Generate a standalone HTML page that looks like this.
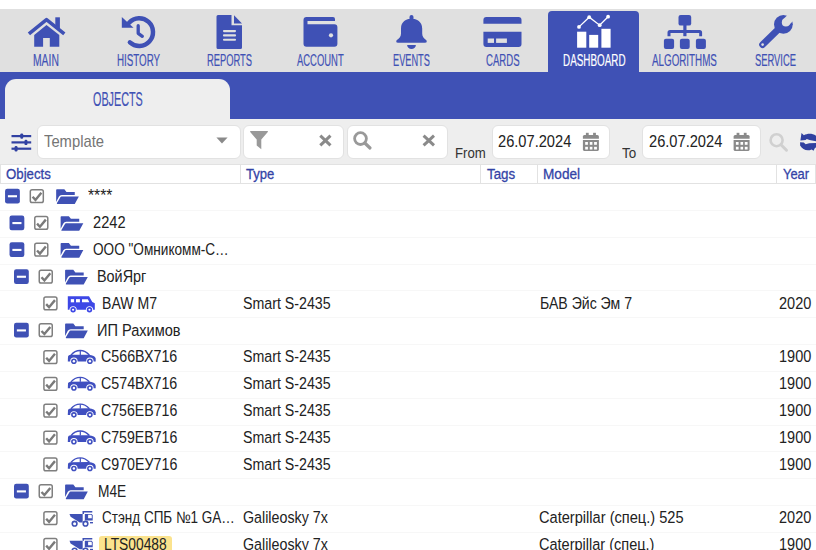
<!DOCTYPE html>
<html><head><meta charset="utf-8"><style>
html,body{margin:0;padding:0;}
body{width:816px;height:550px;position:relative;overflow:hidden;background:#fff;font-family:"Liberation Sans",sans-serif;}
div{position:absolute;}
.t{position:absolute;white-space:nowrap;transform-origin:0 0;}
svg{position:absolute;left:0;top:0;}
</style></head><body>
<div style="left:0.00px;top:9.00px;width:816.00px;height:63.00px;background:#e0e0e0;"></div><div style="left:548.00px;top:10.90px;width:91.00px;height:61.10px;background:#3f51b5;border-radius:4px 4px 0 0;"></div><div style="left:0.00px;top:72.00px;width:816.00px;height:47.00px;background:#3f51b5;"></div><div style="left:5.00px;top:79.00px;width:225.00px;height:41.00px;background:#eeeeee;border-radius:11px 11px 0 0;"></div><div style="left:0.00px;top:119.00px;width:816.00px;height:46.00px;background:#eeeeee;"></div><div style="left:37.00px;top:125.10px;width:203.60px;height:33.60px;background:#fff;border:1px solid #e2e2e2;box-sizing:border-box;border-radius:6px;"></div><div style="left:243.00px;top:125.10px;width:100.60px;height:33.60px;background:#fff;border:1px solid #e2e2e2;box-sizing:border-box;border-radius:6px;"></div><div style="left:347.00px;top:125.10px;width:100.60px;height:33.60px;background:#fff;border:1px solid #e2e2e2;box-sizing:border-box;border-radius:6px;"></div><div style="left:492.10px;top:125.10px;width:117.60px;height:33.60px;background:#fff;border:1px solid #e2e2e2;box-sizing:border-box;border-radius:6px;"></div><div style="left:641.90px;top:125.10px;width:118.80px;height:33.60px;background:#fff;border:1px solid #e2e2e2;box-sizing:border-box;border-radius:6px;"></div><div style="left:0.00px;top:164.20px;width:816.00px;height:19.40px;background:#fff;border:1px solid #e2e2e2;box-sizing:border-box;"></div><div style="left:240.00px;top:164.60px;width:1.00px;height:18.60px;background:#e2e2e2;"></div><div style="left:480.20px;top:164.60px;width:1.00px;height:18.60px;background:#e2e2e2;"></div><div style="left:536.90px;top:164.60px;width:1.00px;height:18.60px;background:#e2e2e2;"></div><div style="left:775.90px;top:164.60px;width:1.00px;height:18.60px;background:#e2e2e2;"></div><div style="left:0.00px;top:209.97px;width:816.00px;height:1.00px;background:#f7f7f7;"></div><div style="left:0.00px;top:236.80px;width:816.00px;height:1.00px;background:#f7f7f7;"></div><div style="left:0.00px;top:263.64px;width:816.00px;height:1.00px;background:#f7f7f7;"></div><div style="left:0.00px;top:290.47px;width:816.00px;height:1.00px;background:#f7f7f7;"></div><div style="left:0.00px;top:317.30px;width:816.00px;height:1.00px;background:#f7f7f7;"></div><div style="left:0.00px;top:344.13px;width:816.00px;height:1.00px;background:#f7f7f7;"></div><div style="left:0.00px;top:370.97px;width:816.00px;height:1.00px;background:#f7f7f7;"></div><div style="left:0.00px;top:397.80px;width:816.00px;height:1.00px;background:#f7f7f7;"></div><div style="left:0.00px;top:424.63px;width:816.00px;height:1.00px;background:#f7f7f7;"></div><div style="left:0.00px;top:451.47px;width:816.00px;height:1.00px;background:#f7f7f7;"></div><div style="left:0.00px;top:478.30px;width:816.00px;height:1.00px;background:#f7f7f7;"></div><div style="left:0.00px;top:505.13px;width:816.00px;height:1.00px;background:#f7f7f7;"></div><div style="left:0.00px;top:531.97px;width:816.00px;height:1.00px;background:#f7f7f7;"></div><div style="left:0.00px;top:558.80px;width:816.00px;height:1.00px;background:#f7f7f7;"></div><div style="left:99.20px;top:536.13px;width:72.40px;height:22.00px;background:#fbe38e;border-radius:3px;"></div>
<svg width="816" height="550" viewBox="0 0 816 550">
<g fill="#3f51b5">
 <path d="M28.9,33.8 L46.5,19.7 L64.3,33.8" fill="none" stroke="#3f51b5" stroke-width="3.6" stroke-linejoin="round"/>
 <rect x="55.3" y="17.3" width="4.6" height="11"/>
 <path d="M34.2,34.9 L46.5,25 L59.3,34.9 V46.7 H49.8 V38 H43.1 V46.7 H34.2 Z"/>
</g>
<g>
 <path d="M129.9,42.3 A13.8,13.8 0 1 0 129.1,22.7" fill="none" stroke="#3f51b5" stroke-width="4.5" stroke-linecap="round"/>
 <path d="M121.8,16.9 V27.8 H133.5 Z" fill="#3f51b5"/>
 <path d="M138.2,25.7 V33.3 L142.3,36.3" fill="none" stroke="#3f51b5" stroke-width="3.3" stroke-linecap="round" stroke-linejoin="round"/>
</g>
<g fill="#3f51b5">
 <path d="M218,14.9 H231.5 V25.3 H242 V47.4 Q242,48.9 240.5,48.9 H218 Q216.5,48.9 216.5,47.4 V16.4 Q216.5,14.9 218,14.9 Z"/>
 <path d="M234,15.2 L242,23.5 H234 Z"/>
 <g stroke="#e0e0e0" stroke-width="2.1" stroke-linecap="round"><line x1="224" y1="31.1" x2="235" y2="31.1"/><line x1="224" y1="35.4" x2="235" y2="35.4"/><line x1="224" y1="39.7" x2="235" y2="39.7"/></g>
</g>
<g fill="#3f51b5">
 <path d="M306.5,16.9 H333 Q335,16.9 335,18.9 V20.9 H307.5 V24.2 H334.4 Q337.4,24.2 337.4,27.2 V43.7 Q337.4,46.7 334.4,46.7 H306.5 Q303.5,46.7 303.5,43.7 V19.9 Q303.5,16.9 306.5,16.9 Z"/>
 <circle cx="331" cy="35.3" r="2.1" fill="#e0e0e0"/>
</g>
<g fill="#3f51b5">
 <rect x="409.5" y="15" width="4" height="5" rx="2"/>
 <path d="M411.5,18.6 C416.8,18.6 422.2,22 422.2,28.5 V33.5 Q422.2,37.5 426.4,40.2 Q427.5,42.7 425,42.7 H398 Q395.5,42.7 396.6,40.2 Q401,37.5 401,33.5 V28.5 C401,22 406.2,18.6 411.5,18.6 Z"/>
 <path d="M407.1,44.9 H415.9 A4.4,4 0 0 1 407.1,44.9 Z"/>
</g>
<g fill="#3f51b5">
 <path d="M486.4,16.9 H518.5 Q521.5,16.9 521.5,19.9 V23.8 H483.4 V19.9 Q483.4,16.9 486.4,16.9 Z"/>
 <path d="M483.4,31.8 H521.5 V43.9 Q521.5,46.9 518.5,46.9 H486.4 Q483.4,46.9 483.4,43.9 Z"/>
 <rect x="487.7" y="38.5" width="6.3" height="4.4" fill="#e0e0e0"/>
 <rect x="496.1" y="38.5" width="10.8" height="4.4" fill="#e0e0e0"/>
</g>
<g fill="#fff">
 <polyline points="579,26.9 589.2,17.2 599.7,25.2 608.1,16.7" fill="none" stroke="#fff" stroke-width="1.3"/>
 <circle cx="579" cy="26.9" r="1.9"/><circle cx="589.2" cy="17.2" r="1.9"/><circle cx="599.7" cy="25.2" r="1.9"/><circle cx="608.1" cy="16.7" r="1.9"/>
 <rect x="577.1" y="31.7" width="9.2" height="16"/>
 <rect x="589.2" y="34.9" width="9" height="12.8"/>
 <rect x="601.4" y="28.8" width="9.2" height="18.9"/>
</g>
<g fill="#3f51b5">
 <rect x="678.5" y="14.9" width="12.7" height="10.7" rx="2.2"/>
 <rect x="683.3" y="25" width="3.2" height="11.2"/>
 <path d="M667.5,36.2 V32.5 Q667.5,30 670,30 H699.6 Q702.1,30 702.1,32.5 V36.2 H699.2 V32.9 H670.5 V36.2 Z"/>
 <rect x="663.9" y="38.7" width="10.2" height="10.2" rx="2"/>
 <rect x="679.9" y="38.7" width="9.8" height="10.2" rx="2"/>
 <rect x="695.9" y="38.7" width="10" height="10.2" rx="2"/>
</g>
<g fill="#3f51b5">
 <line x1="762.6" y1="44.6" x2="780" y2="27.6" stroke="#3f51b5" stroke-width="6.8" stroke-linecap="round"/>
 <circle cx="783.4" cy="24.3" r="9.4"/>
</g>
<g fill="#e0e0e0">
 <circle cx="785.9" cy="22.4" r="4.1"/>
 <line x1="785.9" y1="22.4" x2="796" y2="12.3" stroke="#e0e0e0" stroke-width="8.2"/>
 <circle cx="762.6" cy="44.6" r="1.3"/>
</g>
<rect x="5.06" y="188.70" width="14.8" height="14.7" rx="2.2" fill="#3f51b5"/><rect x="7.91" y="195.20" width="9.1" height="2.1" fill="#fff"/><g transform="translate(56.16,189.30)" fill="#3f51b5"><path d="M0.8,0 H8.2 L10.3,2.7 H18.6 V5.7 H5.6 Q3.6,5.7 2.7,7.4 L0,12.6 V0.8 Q0,0 0.8,0 Z"/><path d="M5.4,7.1 H22.7 L18.6,14.7 H1.3 Q0.4,14.7 0.8,13.8 L4.2,8 Q4.6,7.1 5.4,7.1 Z"/></g><rect x="30.31" y="189.65" width="13" height="12.8" rx="1.8" fill="#fff" stroke="#7f7f7f" stroke-width="1.5"/><path d="M32.56,196.80 L35.46,199.90 L41.36,192.80" fill="none" stroke="#7a7a7a" stroke-width="2.4"/><rect x="9.53" y="215.53" width="14.8" height="14.7" rx="2.2" fill="#3f51b5"/><rect x="12.38" y="222.03" width="9.1" height="2.1" fill="#fff"/><g transform="translate(60.63,216.13)" fill="#3f51b5"><path d="M0.8,0 H8.2 L10.3,2.7 H18.6 V5.7 H5.6 Q3.6,5.7 2.7,7.4 L0,12.6 V0.8 Q0,0 0.8,0 Z"/><path d="M5.4,7.1 H22.7 L18.6,14.7 H1.3 Q0.4,14.7 0.8,13.8 L4.2,8 Q4.6,7.1 5.4,7.1 Z"/></g><rect x="34.78" y="216.48" width="13" height="12.8" rx="1.8" fill="#fff" stroke="#7f7f7f" stroke-width="1.5"/><path d="M37.03,223.63 L39.93,226.73 L45.83,219.63" fill="none" stroke="#7a7a7a" stroke-width="2.4"/><rect x="9.53" y="242.37" width="14.8" height="14.7" rx="2.2" fill="#3f51b5"/><rect x="12.38" y="248.87" width="9.1" height="2.1" fill="#fff"/><g transform="translate(60.63,242.97)" fill="#3f51b5"><path d="M0.8,0 H8.2 L10.3,2.7 H18.6 V5.7 H5.6 Q3.6,5.7 2.7,7.4 L0,12.6 V0.8 Q0,0 0.8,0 Z"/><path d="M5.4,7.1 H22.7 L18.6,14.7 H1.3 Q0.4,14.7 0.8,13.8 L4.2,8 Q4.6,7.1 5.4,7.1 Z"/></g><rect x="34.78" y="243.32" width="13" height="12.8" rx="1.8" fill="#fff" stroke="#7f7f7f" stroke-width="1.5"/><path d="M37.03,250.47 L39.93,253.57 L45.83,246.47" fill="none" stroke="#7a7a7a" stroke-width="2.4"/><rect x="14.00" y="269.20" width="14.8" height="14.7" rx="2.2" fill="#3f51b5"/><rect x="16.85" y="275.70" width="9.1" height="2.1" fill="#fff"/><g transform="translate(65.10,269.80)" fill="#3f51b5"><path d="M0.8,0 H8.2 L10.3,2.7 H18.6 V5.7 H5.6 Q3.6,5.7 2.7,7.4 L0,12.6 V0.8 Q0,0 0.8,0 Z"/><path d="M5.4,7.1 H22.7 L18.6,14.7 H1.3 Q0.4,14.7 0.8,13.8 L4.2,8 Q4.6,7.1 5.4,7.1 Z"/></g><rect x="39.25" y="270.15" width="13" height="12.8" rx="1.8" fill="#fff" stroke="#7f7f7f" stroke-width="1.5"/><path d="M41.50,277.30 L44.40,280.40 L50.30,273.30" fill="none" stroke="#7a7a7a" stroke-width="2.4"/><rect x="43.92" y="296.98" width="13" height="12.8" rx="1.8" fill="#fff" stroke="#7f7f7f" stroke-width="1.5"/><path d="M46.17,304.13 L49.07,307.23 L54.97,300.13" fill="none" stroke="#7a7a7a" stroke-width="2.4"/><g transform="translate(67.80,296.13)"><path d="M0,0 H21.2 L24.5,5.8 L27,7 V13.7 H0 Z" fill="#3d47e6"/><rect x="3" y="3" width="3.3" height="3.2" fill="#fff"/><rect x="8.2" y="3" width="3.9" height="3.2" fill="#fff"/><path d="M14.2,3 H20 L21.6,6.2 H14.2 Z" fill="#fff"/><circle cx="5.3" cy="13.6" r="3.6" fill="#fff"/><circle cx="21.7" cy="13.6" r="3.6" fill="#fff"/><circle cx="5.3" cy="13.6" r="2.7" fill="#3d47e6"/><circle cx="21.7" cy="13.6" r="2.7" fill="#3d47e6"/><circle cx="5.3" cy="13.6" r="1.1" fill="#fff"/><circle cx="21.7" cy="13.6" r="1.1" fill="#fff"/></g><rect x="14.00" y="322.87" width="14.8" height="14.7" rx="2.2" fill="#3f51b5"/><rect x="16.85" y="329.37" width="9.1" height="2.1" fill="#fff"/><g transform="translate(65.10,323.46)" fill="#3f51b5"><path d="M0.8,0 H8.2 L10.3,2.7 H18.6 V5.7 H5.6 Q3.6,5.7 2.7,7.4 L0,12.6 V0.8 Q0,0 0.8,0 Z"/><path d="M5.4,7.1 H22.7 L18.6,14.7 H1.3 Q0.4,14.7 0.8,13.8 L4.2,8 Q4.6,7.1 5.4,7.1 Z"/></g><rect x="39.25" y="323.81" width="13" height="12.8" rx="1.8" fill="#fff" stroke="#7f7f7f" stroke-width="1.5"/><path d="M41.50,330.96 L44.40,334.06 L50.30,326.96" fill="none" stroke="#7a7a7a" stroke-width="2.4"/><rect x="43.92" y="350.65" width="13" height="12.8" rx="1.8" fill="#fff" stroke="#7f7f7f" stroke-width="1.5"/><path d="M46.17,357.80 L49.07,360.90 L54.97,353.80" fill="none" stroke="#7a7a7a" stroke-width="2.4"/><g transform="translate(67.80,344.60)"><path d="M0.2,11.8 Q0.6,10.3 2.8,10.2 L20.8,10.1 Q27.3,10.5 27.9,14 L27.9,16.8 H0 Z" fill="#3f4fc0"/><path d="M3.2,10.5 Q6.8,5.9 12.4,5.9 Q17.6,6.0 21.6,10.4" fill="none" stroke="#3f4fc0" stroke-width="1.4"/><rect x="11.9" y="6.1" width="1.2" height="4.3" fill="#3f4fc0"/><circle cx="6.1" cy="16.6" r="3.7" fill="#fff"/><circle cx="22.1" cy="16.6" r="3.7" fill="#fff"/><circle cx="6.1" cy="16.6" r="2.8" fill="#3f4fc0"/><circle cx="22.1" cy="16.6" r="2.8" fill="#3f4fc0"/><circle cx="6.1" cy="16.6" r="1.2" fill="#fff"/><circle cx="22.1" cy="16.6" r="1.2" fill="#fff"/></g><rect x="43.92" y="377.48" width="13" height="12.8" rx="1.8" fill="#fff" stroke="#7f7f7f" stroke-width="1.5"/><path d="M46.17,384.63 L49.07,387.73 L54.97,380.63" fill="none" stroke="#7a7a7a" stroke-width="2.4"/><g transform="translate(67.80,371.43)"><path d="M0.2,11.8 Q0.6,10.3 2.8,10.2 L20.8,10.1 Q27.3,10.5 27.9,14 L27.9,16.8 H0 Z" fill="#3f4fc0"/><path d="M3.2,10.5 Q6.8,5.9 12.4,5.9 Q17.6,6.0 21.6,10.4" fill="none" stroke="#3f4fc0" stroke-width="1.4"/><rect x="11.9" y="6.1" width="1.2" height="4.3" fill="#3f4fc0"/><circle cx="6.1" cy="16.6" r="3.7" fill="#fff"/><circle cx="22.1" cy="16.6" r="3.7" fill="#fff"/><circle cx="6.1" cy="16.6" r="2.8" fill="#3f4fc0"/><circle cx="22.1" cy="16.6" r="2.8" fill="#3f4fc0"/><circle cx="6.1" cy="16.6" r="1.2" fill="#fff"/><circle cx="22.1" cy="16.6" r="1.2" fill="#fff"/></g><rect x="43.92" y="404.31" width="13" height="12.8" rx="1.8" fill="#fff" stroke="#7f7f7f" stroke-width="1.5"/><path d="M46.17,411.46 L49.07,414.56 L54.97,407.46" fill="none" stroke="#7a7a7a" stroke-width="2.4"/><g transform="translate(67.80,398.26)"><path d="M0.2,11.8 Q0.6,10.3 2.8,10.2 L20.8,10.1 Q27.3,10.5 27.9,14 L27.9,16.8 H0 Z" fill="#3f4fc0"/><path d="M3.2,10.5 Q6.8,5.9 12.4,5.9 Q17.6,6.0 21.6,10.4" fill="none" stroke="#3f4fc0" stroke-width="1.4"/><rect x="11.9" y="6.1" width="1.2" height="4.3" fill="#3f4fc0"/><circle cx="6.1" cy="16.6" r="3.7" fill="#fff"/><circle cx="22.1" cy="16.6" r="3.7" fill="#fff"/><circle cx="6.1" cy="16.6" r="2.8" fill="#3f4fc0"/><circle cx="22.1" cy="16.6" r="2.8" fill="#3f4fc0"/><circle cx="6.1" cy="16.6" r="1.2" fill="#fff"/><circle cx="22.1" cy="16.6" r="1.2" fill="#fff"/></g><rect x="43.92" y="431.15" width="13" height="12.8" rx="1.8" fill="#fff" stroke="#7f7f7f" stroke-width="1.5"/><path d="M46.17,438.30 L49.07,441.40 L54.97,434.30" fill="none" stroke="#7a7a7a" stroke-width="2.4"/><g transform="translate(67.80,425.10)"><path d="M0.2,11.8 Q0.6,10.3 2.8,10.2 L20.8,10.1 Q27.3,10.5 27.9,14 L27.9,16.8 H0 Z" fill="#3f4fc0"/><path d="M3.2,10.5 Q6.8,5.9 12.4,5.9 Q17.6,6.0 21.6,10.4" fill="none" stroke="#3f4fc0" stroke-width="1.4"/><rect x="11.9" y="6.1" width="1.2" height="4.3" fill="#3f4fc0"/><circle cx="6.1" cy="16.6" r="3.7" fill="#fff"/><circle cx="22.1" cy="16.6" r="3.7" fill="#fff"/><circle cx="6.1" cy="16.6" r="2.8" fill="#3f4fc0"/><circle cx="22.1" cy="16.6" r="2.8" fill="#3f4fc0"/><circle cx="6.1" cy="16.6" r="1.2" fill="#fff"/><circle cx="22.1" cy="16.6" r="1.2" fill="#fff"/></g><rect x="43.92" y="457.98" width="13" height="12.8" rx="1.8" fill="#fff" stroke="#7f7f7f" stroke-width="1.5"/><path d="M46.17,465.13 L49.07,468.23 L54.97,461.13" fill="none" stroke="#7a7a7a" stroke-width="2.4"/><g transform="translate(67.80,451.93)"><path d="M0.2,11.8 Q0.6,10.3 2.8,10.2 L20.8,10.1 Q27.3,10.5 27.9,14 L27.9,16.8 H0 Z" fill="#3f4fc0"/><path d="M3.2,10.5 Q6.8,5.9 12.4,5.9 Q17.6,6.0 21.6,10.4" fill="none" stroke="#3f4fc0" stroke-width="1.4"/><rect x="11.9" y="6.1" width="1.2" height="4.3" fill="#3f4fc0"/><circle cx="6.1" cy="16.6" r="3.7" fill="#fff"/><circle cx="22.1" cy="16.6" r="3.7" fill="#fff"/><circle cx="6.1" cy="16.6" r="2.8" fill="#3f4fc0"/><circle cx="22.1" cy="16.6" r="2.8" fill="#3f4fc0"/><circle cx="6.1" cy="16.6" r="1.2" fill="#fff"/><circle cx="22.1" cy="16.6" r="1.2" fill="#fff"/></g><rect x="14.00" y="483.86" width="14.8" height="14.7" rx="2.2" fill="#3f51b5"/><rect x="16.85" y="490.36" width="9.1" height="2.1" fill="#fff"/><g transform="translate(65.10,484.46)" fill="#3f51b5"><path d="M0.8,0 H8.2 L10.3,2.7 H18.6 V5.7 H5.6 Q3.6,5.7 2.7,7.4 L0,12.6 V0.8 Q0,0 0.8,0 Z"/><path d="M5.4,7.1 H22.7 L18.6,14.7 H1.3 Q0.4,14.7 0.8,13.8 L4.2,8 Q4.6,7.1 5.4,7.1 Z"/></g><rect x="39.25" y="484.81" width="13" height="12.8" rx="1.8" fill="#fff" stroke="#7f7f7f" stroke-width="1.5"/><path d="M41.50,491.96 L44.40,495.06 L50.30,487.96" fill="none" stroke="#7a7a7a" stroke-width="2.4"/><rect x="43.92" y="511.65" width="13" height="12.8" rx="1.8" fill="#fff" stroke="#7f7f7f" stroke-width="1.5"/><path d="M46.17,518.80 L49.07,521.90 L54.97,514.80" fill="none" stroke="#7a7a7a" stroke-width="2.4"/><g transform="translate(62,506.70)"><path d="M7.5,7.2 H20.7 V15.8 H17.7 L8.6,10 Z" fill="#3f51b5"/><path d="M20.5,4.4 H30.3 V5.9 H22 V7.2 H20.5 Z" fill="#3f51b5"/><path d="M22.8,7.2 H29.8 L30.7,8.6 V13.7 H22.8 Z" fill="#3f51b5"/><path d="M26.1,8.1 H29.3 L29.8,9 V11.6 H26.1 Z" fill="#fff"/><rect x="28" y="15.3" width="3" height="1.4" fill="#3f51b5"/><circle cx="12.6" cy="17" r="3.1" fill="#3f51b5"/><circle cx="23.5" cy="17" r="3.1" fill="#3f51b5"/><circle cx="12.6" cy="17" r="1.5" fill="#fff"/><circle cx="23.5" cy="17" r="1.5" fill="#fff"/></g><rect x="43.92" y="538.48" width="13" height="12.8" rx="1.8" fill="#fff" stroke="#7f7f7f" stroke-width="1.5"/><path d="M46.17,545.63 L49.07,548.73 L54.97,541.63" fill="none" stroke="#7a7a7a" stroke-width="2.4"/><g transform="translate(62,533.53)"><path d="M7.5,7.2 H20.7 V15.8 H17.7 L8.6,10 Z" fill="#3f51b5"/><path d="M20.5,4.4 H30.3 V5.9 H22 V7.2 H20.5 Z" fill="#3f51b5"/><path d="M22.8,7.2 H29.8 L30.7,8.6 V13.7 H22.8 Z" fill="#3f51b5"/><path d="M26.1,8.1 H29.3 L29.8,9 V11.6 H26.1 Z" fill="#fff"/><rect x="28" y="15.3" width="3" height="1.4" fill="#3f51b5"/><circle cx="12.6" cy="17" r="3.1" fill="#3f51b5"/><circle cx="23.5" cy="17" r="3.1" fill="#3f51b5"/><circle cx="12.6" cy="17" r="1.5" fill="#fff"/><circle cx="23.5" cy="17" r="1.5" fill="#fff"/></g>
<g fill="#3141a2">
 <rect x="11.5" y="135.0" width="19.7" height="2.2"/>
 <rect x="11.5" y="141.3" width="19.7" height="2.2"/>
 <rect x="11.5" y="147.6" width="19.7" height="2.2"/>
 <rect x="20.3" y="133.4" width="2.9" height="5.4" rx="1.2"/>
 <rect x="24.5" y="139.7" width="2.9" height="5.4" rx="1.2"/>
 <rect x="14.6" y="146.0" width="2.9" height="5.4" rx="1.2"/>
</g>
<path d="M216.4,137.6 H227.6 L222,143.6 Z" fill="#8a8a8a"/>
<path d="M250.6,131 H267.4 Q268.3,131.2 267.8,132 L261.3,139.5 V149.2 L256.7,145.6 V139.5 L250.2,132 Q249.8,131.2 250.6,131 Z" fill="#999"/>
<g stroke="#8a8a8a" stroke-width="3" stroke-linecap="butt">
 <line x1="320.3" y1="135.6" x2="330.5" y2="145.3"/><line x1="330.5" y1="135.6" x2="320.3" y2="145.3"/>
 <line x1="423.6" y1="135.6" x2="434" y2="145.3"/><line x1="434" y1="135.6" x2="423.6" y2="145.3"/>
</g>
<g stroke="#999" fill="none">
 <circle cx="360.5" cy="138.6" r="5.9" stroke-width="2.8"/>
 <line x1="364.8" y1="143" x2="370" y2="148" stroke-width="3.2" stroke-linecap="round"/>
</g>
<g stroke="#d0d0d0" fill="none">
 <circle cx="776.6" cy="140.2" r="6" stroke-width="2.6"/>
 <line x1="781" y1="144.7" x2="786.5" y2="150.2" stroke-width="3" stroke-linecap="round"/>
</g>
<g fill="#8a8a8a" transform="translate(0.00,0)">
 <rect x="585.9" y="132.8" width="2.8" height="3"/><rect x="593.1" y="132.8" width="2.8" height="3"/>
 <path d="M584.4,135.1 H597.4 Q598.9,135.1 598.9,136.6 V138.7 H582.9 V136.6 Q582.9,135.1 584.4,135.1 Z"/>
 <path d="M582.9,140 H598.9 V149.6 Q598.9,150.9 597.6,150.9 H584.2 Q582.9,150.9 582.9,149.6 Z"/>
 <g fill="#fff"><rect x="585.2" y="142" width="2.7" height="2.8"/><rect x="589.8" y="142" width="2.6" height="2.8"/><rect x="594.1" y="142" width="2.8" height="2.8"/>
 <rect x="585.2" y="146.8" width="2.7" height="2.7"/><rect x="589.8" y="146.8" width="2.6" height="2.7"/><rect x="594.1" y="146.8" width="2.8" height="2.7"/></g>
</g><g fill="#8a8a8a" transform="translate(150.70,0)">
 <rect x="585.9" y="132.8" width="2.8" height="3"/><rect x="593.1" y="132.8" width="2.8" height="3"/>
 <path d="M584.4,135.1 H597.4 Q598.9,135.1 598.9,136.6 V138.7 H582.9 V136.6 Q582.9,135.1 584.4,135.1 Z"/>
 <path d="M582.9,140 H598.9 V149.6 Q598.9,150.9 597.6,150.9 H584.2 Q582.9,150.9 582.9,149.6 Z"/>
 <g fill="#fff"><rect x="585.2" y="142" width="2.7" height="2.8"/><rect x="589.8" y="142" width="2.6" height="2.8"/><rect x="594.1" y="142" width="2.8" height="2.8"/>
 <rect x="585.2" y="146.8" width="2.7" height="2.7"/><rect x="589.8" y="146.8" width="2.6" height="2.7"/><rect x="594.1" y="146.8" width="2.8" height="2.7"/></g>
</g>
<g fill="#3040a0"><path d="M800.4,140.6 L801.5,133.0 L803.9,135.3 C807.5,133.2 812.5,133.2 816.5,136 V141.3 L809.5,139.9 L806.8,139.0 L805.6,140.0 Z"/><path d="M800.1,142.2 L803.8,142.6 L805.6,144.3 L809.2,143.3 L816.5,143.0 V146.8 L814.6,148.6 L813.6,150.8 L811.6,149.4 C807,151.6 802.5,149.4 800.1,145.5 Z"/></g>
</svg>
<span class="t" style="left:33.30px;top:51.68px;font-size:16.45px;line-height:16.45px;color:#3f51b5;transform:scaleX(0.6298);-webkit-text-stroke:0.2px #3f51b5;">MAIN</span><span class="t" style="left:116.50px;top:51.68px;font-size:16.45px;line-height:16.45px;color:#3f51b5;transform:scaleX(0.5944);-webkit-text-stroke:0.2px #3f51b5;">HISTORY</span><span class="t" style="left:206.50px;top:51.68px;font-size:16.45px;line-height:16.45px;color:#3f51b5;transform:scaleX(0.5693);-webkit-text-stroke:0.2px #3f51b5;">REPORTS</span><span class="t" style="left:297.00px;top:51.68px;font-size:16.45px;line-height:16.45px;color:#3f51b5;transform:scaleX(0.5742);-webkit-text-stroke:0.2px #3f51b5;">ACCOUNT</span><span class="t" style="left:393.40px;top:51.68px;font-size:16.45px;line-height:16.45px;color:#3f51b5;transform:scaleX(0.5592);-webkit-text-stroke:0.2px #3f51b5;">EVENTS</span><span class="t" style="left:485.80px;top:51.68px;font-size:16.45px;line-height:16.45px;color:#3f51b5;transform:scaleX(0.5836);-webkit-text-stroke:0.2px #3f51b5;">CARDS</span><span class="t" style="left:562.60px;top:51.68px;font-size:16.45px;line-height:16.45px;color:#fff;transform:scaleX(0.6008);-webkit-text-stroke:0.2px #fff;">DASHBOARD</span><span class="t" style="left:652.30px;top:51.68px;font-size:16.45px;line-height:16.45px;color:#3f51b5;transform:scaleX(0.5968);-webkit-text-stroke:0.2px #3f51b5;">ALGORITHMS</span><span class="t" style="left:755.40px;top:51.68px;font-size:16.45px;line-height:16.45px;color:#3f51b5;transform:scaleX(0.5701);-webkit-text-stroke:0.2px #3f51b5;">SERVICE</span><span class="t" style="left:92.50px;top:88.50px;font-size:20.67px;line-height:20.67px;color:#3f51b5;transform:scaleX(0.5224);-webkit-text-stroke:0.2px #3f51b5;">OBJECTS</span><span class="t" style="left:44.00px;top:133.12px;font-size:16.16px;line-height:16.16px;color:#757575;transform:scaleX(0.9152);">Template</span><span class="t" style="left:455.20px;top:144.61px;font-size:14.99px;line-height:14.99px;color:#333;transform:scaleX(0.8805);">From</span><span class="t" style="left:622.10px;top:144.61px;font-size:14.99px;line-height:14.99px;color:#333;transform:scaleX(0.8968);">To</span><span class="t" style="left:498.30px;top:133.32px;font-size:16.16px;line-height:16.16px;color:#222;transform:scaleX(0.9064);">26.07.2024</span><span class="t" style="left:649.10px;top:133.32px;font-size:16.16px;line-height:16.16px;color:#222;transform:scaleX(0.9064);">26.07.2024</span><span class="t" style="left:6.25px;top:166.58px;font-size:14.56px;line-height:14.56px;color:#3343a6;transform:scaleX(0.9089);-webkit-text-stroke:0.3px #3343a6;">Objects</span><span class="t" style="left:246.00px;top:166.58px;font-size:14.56px;line-height:14.56px;color:#3343a6;transform:scaleX(0.8968);-webkit-text-stroke:0.3px #3343a6;">Type</span><span class="t" style="left:486.80px;top:166.58px;font-size:14.56px;line-height:14.56px;color:#3343a6;transform:scaleX(0.9172);-webkit-text-stroke:0.3px #3343a6;">Tags</span><span class="t" style="left:542.50px;top:166.58px;font-size:14.56px;line-height:14.56px;color:#3343a6;transform:scaleX(0.9358);-webkit-text-stroke:0.3px #3343a6;">Model</span><span class="t" style="left:782.60px;top:166.58px;font-size:14.56px;line-height:14.56px;color:#3343a6;transform:scaleX(0.8874);-webkit-text-stroke:0.3px #3343a6;">Year</span><span class="t" style="left:88.30px;top:187.37px;font-size:16.30px;line-height:16.30px;color:#222;transform:scaleX(0.9615);">****</span><span class="t" style="left:92.60px;top:214.20px;font-size:16.30px;line-height:16.30px;color:#222;transform:scaleX(0.8989);">2242</span><span class="t" style="left:92.90px;top:241.04px;font-size:16.30px;line-height:16.30px;color:#222;transform:scaleX(0.8355);">ООО "Омникомм-С…</span><span class="t" style="left:97.30px;top:267.87px;font-size:16.30px;line-height:16.30px;color:#222;transform:scaleX(0.8848);">ВойЯрг</span><span class="t" style="left:101.90px;top:294.70px;font-size:16.30px;line-height:16.30px;color:#222;transform:scaleX(0.8649);">BAW M7</span><span class="t" style="left:242.50px;top:294.70px;font-size:16.30px;line-height:16.30px;color:#222;transform:scaleX(0.8729);">Smart S-2435</span><span class="t" style="left:539.70px;top:294.70px;font-size:16.30px;line-height:16.30px;color:#222;transform:scaleX(0.8651);">БАВ Эйс Эм 7</span><span class="t" style="left:778.90px;top:294.70px;font-size:16.30px;line-height:16.30px;color:#222;transform:scaleX(0.8906);">2020</span><span class="t" style="left:97.30px;top:321.53px;font-size:16.30px;line-height:16.30px;color:#222;transform:scaleX(0.8946);">ИП Рахимов</span><span class="t" style="left:101.20px;top:348.37px;font-size:16.30px;line-height:16.30px;color:#222;transform:scaleX(0.8761);">С566ВХ716</span><span class="t" style="left:242.50px;top:348.37px;font-size:16.30px;line-height:16.30px;color:#222;transform:scaleX(0.8729);">Smart S-2435</span><span class="t" style="left:778.90px;top:348.37px;font-size:16.30px;line-height:16.30px;color:#222;transform:scaleX(0.8906);">1900</span><span class="t" style="left:101.20px;top:375.20px;font-size:16.30px;line-height:16.30px;color:#222;transform:scaleX(0.8761);">С574ВХ716</span><span class="t" style="left:242.50px;top:375.20px;font-size:16.30px;line-height:16.30px;color:#222;transform:scaleX(0.8729);">Smart S-2435</span><span class="t" style="left:778.90px;top:375.20px;font-size:16.30px;line-height:16.30px;color:#222;transform:scaleX(0.8906);">1900</span><span class="t" style="left:101.20px;top:402.03px;font-size:16.30px;line-height:16.30px;color:#222;transform:scaleX(0.8689);">С756ЕВ716</span><span class="t" style="left:242.50px;top:402.03px;font-size:16.30px;line-height:16.30px;color:#222;transform:scaleX(0.8729);">Smart S-2435</span><span class="t" style="left:778.90px;top:402.03px;font-size:16.30px;line-height:16.30px;color:#222;transform:scaleX(0.8906);">1900</span><span class="t" style="left:101.20px;top:428.87px;font-size:16.30px;line-height:16.30px;color:#222;transform:scaleX(0.8689);">С759ЕВ716</span><span class="t" style="left:242.50px;top:428.87px;font-size:16.30px;line-height:16.30px;color:#222;transform:scaleX(0.8729);">Smart S-2435</span><span class="t" style="left:778.90px;top:428.87px;font-size:16.30px;line-height:16.30px;color:#222;transform:scaleX(0.8906);">1900</span><span class="t" style="left:101.20px;top:455.70px;font-size:16.30px;line-height:16.30px;color:#222;transform:scaleX(0.8741);">С970ЕУ716</span><span class="t" style="left:242.50px;top:455.70px;font-size:16.30px;line-height:16.30px;color:#222;transform:scaleX(0.8729);">Smart S-2435</span><span class="t" style="left:778.90px;top:455.70px;font-size:16.30px;line-height:16.30px;color:#222;transform:scaleX(0.8906);">1900</span><span class="t" style="left:97.50px;top:482.53px;font-size:16.30px;line-height:16.30px;color:#222;transform:scaleX(0.8427);">M4E</span><span class="t" style="left:102.20px;top:509.37px;font-size:16.30px;line-height:16.30px;color:#222;transform:scaleX(0.8292);">Стэнд СПБ №1 GA…</span><span class="t" style="left:242.50px;top:509.37px;font-size:16.30px;line-height:16.30px;color:#222;transform:scaleX(0.8757);">Galileosky 7x</span><span class="t" style="left:539.40px;top:509.37px;font-size:16.30px;line-height:16.30px;color:#222;transform:scaleX(0.8976);">Caterpillar (спец.) 525</span><span class="t" style="left:778.90px;top:509.37px;font-size:16.30px;line-height:16.30px;color:#222;transform:scaleX(0.8906);">2020</span><span class="t" style="left:104.40px;top:536.20px;font-size:16.30px;line-height:16.30px;color:#222;transform:scaleX(0.8484);">LTS00488</span><span class="t" style="left:242.50px;top:536.20px;font-size:16.30px;line-height:16.30px;color:#222;transform:scaleX(0.8757);">Galileosky 7x</span><span class="t" style="left:539.40px;top:536.20px;font-size:16.30px;line-height:16.30px;color:#222;transform:scaleX(0.8920);">Caterpillar (спец.)</span><span class="t" style="left:778.90px;top:536.20px;font-size:16.30px;line-height:16.30px;color:#222;transform:scaleX(0.8906);">1900</span>
</body></html>
